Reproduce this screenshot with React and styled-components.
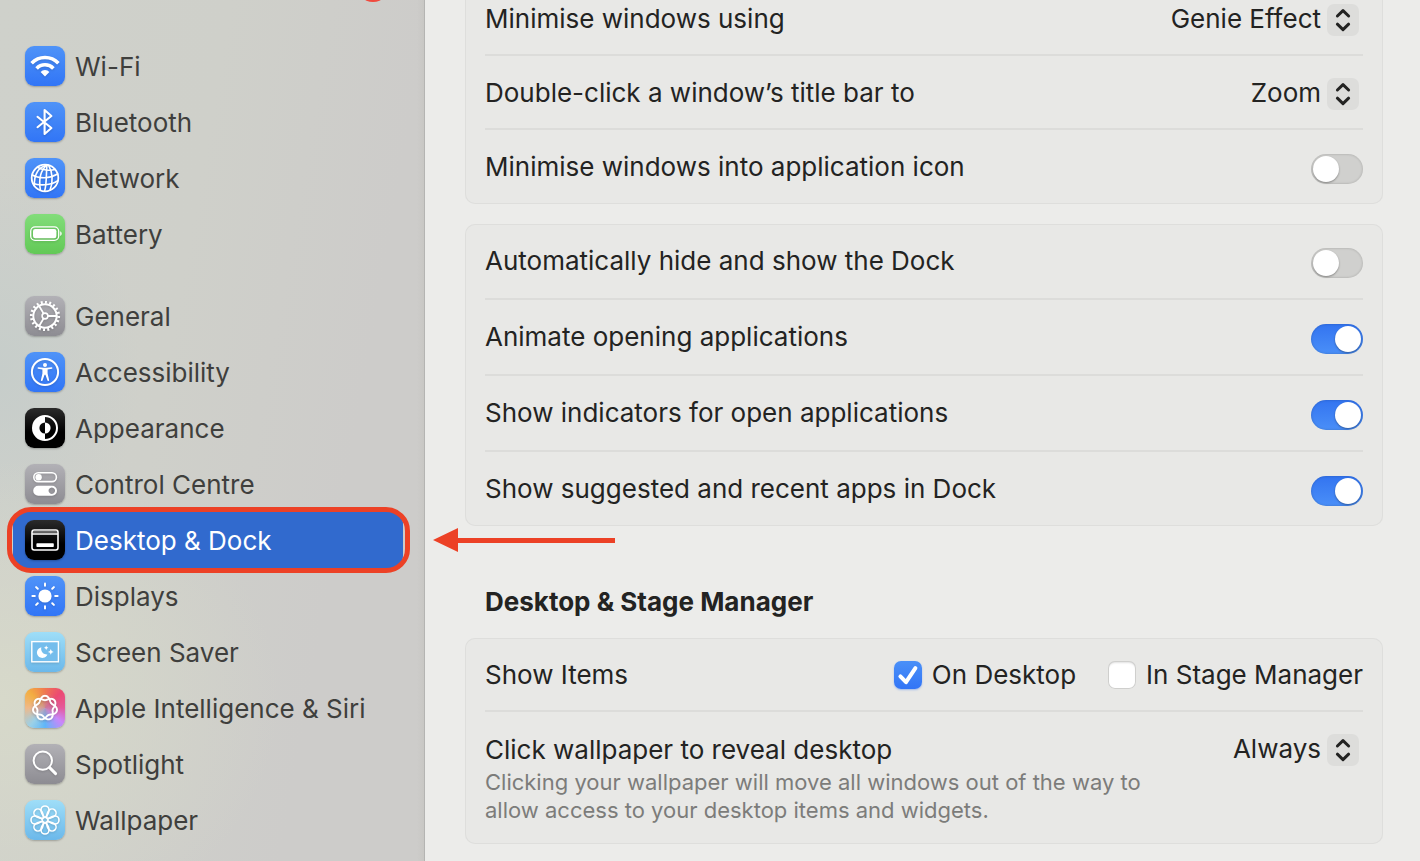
import React, { useState } from "react";
import styled, { createGlobalStyle } from "styled-components";

// STYLES
const GlobalStyle = createGlobalStyle`
  * {
    box-sizing: border-box;
  }
  body {
    margin: 0;
    overflow: hidden;
    background: #ececea;
    color: #232322;
    font-family: Inter, "Liberation Sans", sans-serif;
    font-size: 26px;
    line-height: 36px;
    -webkit-font-smoothing: antialiased;
  }
`;

const Window = styled.div`
  display: flex;
  height: 100vh;
`;

const Sidebar = styled.nav`
  position: relative;
  z-index: 1;
  flex: 0 0 425px;
  padding: 38px 22px 0 13px;
  background:
    linear-gradient(to left, #b4b4b2 0, #b4b4b2 1px, #c8c7c4 1px, rgba(200, 199, 196, 0) 8px),
    radial-gradient(ellipse 280px 240px at 0 700px, #d7d9ca, rgba(215, 217, 202, 0)),
    radial-gradient(ellipse 140px 200px at 0 370px, #c6cdca, rgba(198, 205, 202, 0)),
    linear-gradient(100deg, #cfd1cb 0%, #cfd0ca 40%, #cdccca 75%, #cdccca 100%);
`;

const Badge = styled.span`
  position: absolute;
  top: -32px;
  left: 356px;
  width: 34px;
  height: 34px;
  border-radius: 50%;
  background: #f04a3e;
`;

const Group = styled.ul`
  list-style: none;
  margin: 0 0 26px;
  padding: 0;
`;

const Item = styled.li`
  position: relative;
`;

const ItemLink = styled.a`
  display: flex;
  align-items: center;
  gap: 10px;
  height: 56px;
  padding: 0 12px;
  border-radius: 12px;
  color: ${(p) => (p.$active ? "#ffffff" : "#3f3f3d")};
  background: ${(p) => (p.$active ? "#316ace" : "transparent")};
  text-decoration: none;
  white-space: nowrap;
`;

const ItemName = styled.span`
  padding-top: 2px;
`;

const Tile = styled.span`
  display: block;
  width: 40px;
  height: 40px;
  flex: none;
  border-radius: 9px;
  background: ${(p) => p.$fill};
  box-shadow: 0 1px 2px rgba(0, 0, 0, 0.25);

  svg {
    display: block;
    fill: none;
    stroke: #ffffff;
    stroke-width: 2;
    stroke-linecap: round;
    stroke-linejoin: round;
    filter: drop-shadow(0 1px 1px rgba(0, 0, 0, 0.15));
  }
  .solid {
    fill: #ffffff;
    stroke: none;
  }
`;

const Outline = styled.span`
  position: absolute;
  inset: -5px -7px -5px -6px;
  border: 5px solid #ec4126;
  border-radius: 24px;
  pointer-events: none;
`;

const Arrow = styled.svg`
  position: absolute;
  top: 16px;
  left: 420px;
  fill: #ec4126;
  pointer-events: none;
`;

const Content = styled.main`
  flex: 1;
  min-width: 0;
  padding: 0 37px 0 40px;
`;

const Card = styled.section`
  margin: 0 0 20px;
  padding: 0 20px;
  border-radius: 10px;
  background: #e8e8e6;
  box-shadow: inset 0 0 0 1px #dededc;
`;

// the pane is scrolled a little past the top of its first card
const ScrolledCard = styled(Card)`
  margin-top: -18px;
`;

const Row = styled.div`
  box-sizing: content-box;
  display: flex;
  align-items: ${(p) => (p.$top ? "flex-start" : "center")};
  justify-content: space-between;
  min-height: ${(p) => (p.$top ? 92 : p.$tall ? 74 : 70)}px;
  padding: ${(p) => (p.$top ? "20px 0" : p.$tall ? "0" : "2px 0 0")};

  & + & {
    border-top: 2px solid #dcdcda;
  }
`;

const Label = styled.label`
  display: block;
`;

const Help = styled.p`
  max-width: 670px;
  margin: 0;
  color: #7c7c7a;
  font-size: 22px;
  line-height: 28px;
`;

const Heading = styled.h2`
  margin: 0;
  padding: 38px 20px 18px;
  font-size: 26px;
  font-weight: 700;
  line-height: 36px;
`;

const SelectBox = styled.div`
  position: relative;
  margin: 2px 4px 0 0;

  svg {
    position: absolute;
    top: 0;
    right: 0;
    border-radius: 7px;
    background: #dddddb;
    fill: none;
    stroke: #232322;
    stroke-width: 3;
    stroke-linecap: round;
    stroke-linejoin: round;
    pointer-events: none;
  }
`;

const Select = styled.select`
  display: block;
  field-sizing: content;
  appearance: none;
  height: 32px;
  margin: 0;
  padding: 0 38px 2px 0;
  border: 0;
  background: transparent;
  color: inherit;
  font: inherit;
  line-height: 30px;
  text-align-last: right;
`;

const Switch = styled.input`
  appearance: none;
  display: flex;
  width: 52px;
  height: 30px;
  margin: 4px 0 0;
  padding: 2px;
  border-radius: 15px;
  background: #d0d0ce;
  box-shadow: inset 0 0 2px 1px rgba(0, 0, 0, 0.1);

  &::before {
    content: "";
    width: 26px;
    height: 26px;
    border-radius: 50%;
    background: #ffffff;
    box-shadow: 0 1px 2px rgba(0, 0, 0, 0.35);
  }
  &:checked {
    justify-content: flex-end;
    background: linear-gradient(#3374f0, #4a8ff8);
  }
`;

const Checks = styled.div`
  display: flex;
  gap: 32px;
`;

const Check = styled.label`
  display: flex;
  align-items: center;
  gap: 10px;
`;

const CheckSlot = styled.span`
  position: relative;
  display: block;

  svg {
    position: absolute;
    top: 0;
    left: 0;
    fill: none;
    stroke: #ffffff;
    stroke-width: 4;
    stroke-linecap: round;
    stroke-linejoin: round;
    pointer-events: none;
  }
`;

const CheckInput = styled.input`
  appearance: none;
  display: block;
  width: 28px;
  height: 28px;
  margin: 0;
  border-radius: 7px;
  background: #ffffff;
  box-shadow: inset 0 0 0 1px #cfcfcd, inset 0 2px 2px rgba(0, 0, 0, 0.12);

  &:checked {
    background: linear-gradient(#4a90f8, #3275f6);
    box-shadow: 0 1px 2px rgba(50, 117, 246, 0.4);
  }
`;

const BLUE = "linear-gradient(#4f93f8, #3175f6)";
const GREY = "linear-gradient(#b2b1b6, #8d8c92)";
const BLACK = "linear-gradient(#2b2b2b, #000000 60%)";
const SKY = "linear-gradient(#9fdef8, #6bb8ea)";
const GREEN = "linear-gradient(#82dd7a, #62c956)";
const RAINBOW =
  "radial-gradient(circle at 50% 50%, rgba(190, 140, 170, 0.75), rgba(190, 140, 170, 0) 55%), conic-gradient(from 0deg, #f07850, #ec4a72 45deg, #e55a9c 90deg, #c987fa 130deg, #5fb6f8 180deg, #9ad0e8 220deg, #efb98a 270deg, #f3ae42 315deg, #f07850)";

// seven interlaced lobes, closed after two turns
const knot = () => {
  const points = [];
  for (let i = 0; i < 280; i++) {
    const a = (i / 280) * Math.PI * 4;
    const r = 10 + 2.2 * Math.cos(3.5 * a);
    points.push(
      (20 + r * Math.sin(a)).toFixed(2) + " " + (20 - r * Math.cos(a)).toFixed(2)
    );
  }
  return "M" + points.join("L") + "Z";
};

const turns = [0, 45, 90, 135, 180, 225, 270, 315];

const icons = {
  wifi: (
    <>
      <g strokeWidth="3.6" strokeLinecap="butt">
        <path d="M6.6 17.2a18.6 18.6 0 0 1 26.8 0" />
        <path d="M11.6 22.4a11.5 11.5 0 0 1 16.8 0" />
      </g>
      <path className="solid" d="M20 30.4l-4.4-4.4a6 6 0 0 1 8.8 0z" />
    </>
  ),
  bluetooth: (
    <path d="M12.5 14.8L26.4 26L19.6 32V8L26.4 14L12.5 25.2" strokeWidth="2.1" />
  ),
  network: (
    <g strokeWidth="1.6">
      <circle cx="20" cy="20" r="13.3" strokeWidth="1.8" />
      <path d="M22 6.9C14 9 9 16 9.4 27.6M22 6.9C16 12 13.5 21 15.4 32.2M22 6.9C21 15 22 25 19.6 33.2M23.5 7.2C27.5 14 28.5 24 25 32" />
      <path d="M12.5 9.2C17 12 25 13 30 11.4M7.4 17C14 21 25 20.5 32.6 16M7.8 25.2C14 28 26 27.5 32.8 22.6" />
    </g>
  ),
  battery: (
    <>
      <rect x="5.7" y="12.9" width="28" height="13.4" rx="4.4" strokeWidth="1.3" />
      <rect className="solid" x="8" y="15" width="23.4" height="9.2" rx="2.2" />
      <path className="solid" d="M35.2 17.2c2 .8 2 4 0 4.8z" />
    </>
  ),
  general: (
    <>
      <circle cx="20" cy="20" r="11.7" strokeWidth="2" />
      <circle
        cx="20"
        cy="20"
        r="13.7"
        pathLength="40"
        strokeDasharray="0.9 1.1"
        strokeLinecap="butt"
        strokeWidth="2.8"
      />
      <circle cx="20" cy="20" r="2.9" strokeWidth="1.6" />
      <path d="M23 20H31.4M18.5 17.4L14.3 10.2M18.5 22.6L14.3 29.8" strokeWidth="1.8" />
    </>
  ),
  accessibility: (
    <>
      <circle cx="20" cy="20" r="13.1" />
      <circle className="solid" cx="20" cy="12.9" r="2" />
      <path
        className="solid"
        d="M13.3 15.2L18.4 15.8H21.6L26.7 15.2C27.6 15.2 27.7 16.5 26.9 16.7L22.6 17.6V21.4L24.1 28C24.2 29.1 22.9 29.4 22.5 28.4L20.4 22.8H19.6L17.5 28.4C17.1 29.4 15.8 29.1 15.9 28L17.4 21.4V17.6L13.1 16.7C12.3 16.5 12.4 15.2 13.3 15.2Z"
      />
    </>
  ),
  appearance: (
    <>
      <circle cx="20" cy="20" r="12" />
      <path className="solid" d="M20 8a12 12 0 0 0 0 24v-6.4a5.6 5.6 0 0 1 0-11.2z" />
      <path className="solid" d="M20 14.4a5.6 5.6 0 0 1 0 11.2z" />
    </>
  ),
  control: (
    <>
      <rect x="8.8" y="8.8" width="22.6" height="8.8" rx="4.4" strokeWidth="1.6" />
      <circle className="solid" cx="13.6" cy="13.2" r="3.2" />
      <path
        className="solid"
        fillRule="evenodd"
        d="M13.2 21.7H27a5 5 0 0 1 0 10H13.2a5 5 0 0 1 0-10zM26.8 23.5a3.2 3.2 0 1 0 .01 0z"
      />
    </>
  ),
  dock: (
    <>
      <rect x="7" y="10" width="26" height="20" rx="2.2" strokeWidth="1.6" />
      <path d="M7.5 14H32.5" strokeWidth="1.3" />
      <path d="M8 11.9H32" stroke="#6a6a6a" strokeLinecap="butt" strokeWidth="2" />
      <rect className="solid" x="11.4" y="23.2" width="17.4" height="3.8" rx="0.8" />
    </>
  ),
  displays: (
    <>
      <circle className="solid" cx="20" cy="20" r="6.6" />
      {turns.map((t) => (
        <path key={t} d="M20 7.4V9.8" transform={`rotate(${t} 20 20)`} />
      ))}
    </>
  ),
  saver: (
    <>
      <rect
        x="6.8"
        y="9.6"
        width="26.6"
        height="20.2"
        fill="#74bdec"
        strokeLinejoin="miter"
        strokeWidth="1.4"
      />
      <path
        className="solid"
        d="M16.4 15.2A5.4 5.4 0 1 0 22.4 22.4A5.6 5.6 0 0 1 16.4 15.2Z"
      />
      <path
        className="solid"
        d="M21.2 13.6l.7 1.5 1.5.7-1.5.7-.7 1.5-.7-1.5-1.5-.7 1.5-.7zM25.8 17l.9 2 2 .9-2 .9-.9 2-.9-2-2-.9 2-.9z"
      />
    </>
  ),
  siri: <path d={knot()} strokeWidth="1.9" />,
  spotlight: (
    <>
      <circle cx="17.8" cy="16.6" r="9.2" />
      <path d="M24.6 23.6L30.6 29.6" strokeWidth="2.9" />
    </>
  ),
  wallpaper: (
    <>
      {turns.map((t) => (
        <path
          key={t}
          d="M20 17.6C17.6 15.4 16 12.6 16 10A4 4 0 0 1 24 10C24 12.6 22.4 15.4 20 17.6Z"
          strokeWidth="1.6"
          transform={`rotate(${t} 20 20)`}
        />
      ))}
    </>
  ),
};

const network_items = [
  { name: "Wi-Fi", icon: "wifi", fill: BLUE },
  { name: "Bluetooth", icon: "bluetooth", fill: BLUE },
  { name: "Network", icon: "network", fill: BLUE },
  { name: "Battery", icon: "battery", fill: GREEN },
];

const system_items = [
  { name: "General", icon: "general", fill: GREY },
  { name: "Accessibility", icon: "accessibility", fill: BLUE },
  { name: "Appearance", icon: "appearance", fill: BLACK },
  { name: "Control Centre", icon: "control", fill: GREY },
  { name: "Desktop & Dock", icon: "dock", fill: BLACK },
  { name: "Displays", icon: "displays", fill: BLUE },
  { name: "Screen Saver", icon: "saver", fill: SKY },
  { name: "Apple Intelligence & Siri", icon: "siri", fill: RAINBOW },
  { name: "Spotlight", icon: "spotlight", fill: GREY },
  { name: "Wallpaper", icon: "wallpaper", fill: SKY },
];

const SidebarGroup = ({ items, active }) => (
  <Group>
    {items.map((item) => (
      <Item key={item.name}>
        <ItemLink
          href={"#" + item.icon}
          $active={item.name === active}
          aria-current={item.name === active ? "page" : undefined}
        >
          <Tile $fill={item.fill}>
            <svg width="40" height="40" viewBox="0 0 40 40" aria-hidden="true">
              {icons[item.icon]}
            </svg>
          </Tile>
          <ItemName>{item.name}</ItemName>
        </ItemLink>
        {item.name === active && (
          <>
            <Outline />
            <Arrow width="182" height="24" viewBox="0 0 182 24" aria-hidden="true">
              <path d="M0 12L25 0V10H182V15H25V24Z" />
            </Arrow>
          </>
        )}
      </Item>
    ))}
  </Group>
);

const PopUp = ({ id, options }) => (
  <SelectBox>
    <Select id={id} defaultValue={options[0]}>
      {options.map((o) => (
        <option key={o}>{o}</option>
      ))}
    </Select>
    <svg width="32" height="32" viewBox="0 0 32 32" aria-hidden="true">
      <path d="M10.4 12L16 6.6L21.6 12M10.4 20.2L16 25.6L21.6 20.2" />
    </svg>
  </SelectBox>
);

const SwitchRow = ({ id, label, on }) => {
  const [checked, setChecked] = useState(Boolean(on));
  return (
    <Row $tall>
      <Label htmlFor={id}>{label}</Label>
      <Switch
        id={id}
        type="checkbox"
        role="switch"
        checked={checked}
        onChange={() => setChecked(!checked)}
      />
    </Row>
  );
};

const CheckBox = ({ label, on }) => {
  const [checked, setChecked] = useState(Boolean(on));
  return (
    <Check>
      <CheckSlot>
        <CheckInput
          type="checkbox"
          checked={checked}
          onChange={() => setChecked(!checked)}
        />
        {checked && (
          <svg width="28" height="28" viewBox="0 0 28 28" aria-hidden="true">
            <path d="M6.4 15.4L12 21.2L21.4 7.2" />
          </svg>
        )}
      </CheckSlot>
      {label}
    </Check>
  );
};

const App = () => {
  return (
    <>
      <GlobalStyle />
      <Window>
        <Sidebar>
          <Badge />
          <SidebarGroup items={network_items} />
          <SidebarGroup items={system_items} active="Desktop & Dock" />
        </Sidebar>
        <Content>
          <ScrolledCard>
            <Row>
              <Label htmlFor="minimise">Minimise windows using</Label>
              <PopUp id="minimise" options={["Genie Effect", "Scale Effect"]} />
            </Row>
            <Row>
              <Label htmlFor="titlebar">Double-click a window’s title bar to</Label>
              <PopUp id="titlebar" options={["Zoom", "Minimise"]} />
            </Row>
            <SwitchRow id="into-icon" label="Minimise windows into application icon" />
          </ScrolledCard>
          <Card>
            <SwitchRow id="autohide" label="Automatically hide and show the Dock" />
            <SwitchRow id="animate" label="Animate opening applications" on />
            <SwitchRow id="indicators" label="Show indicators for open applications" on />
            <SwitchRow id="recents" label="Show suggested and recent apps in Dock" on />
          </Card>
          <Heading>Desktop &amp; Stage Manager</Heading>
          <Card>
            <Row>
              <span>Show Items</span>
              <Checks>
                <CheckBox label="On Desktop" on />
                <CheckBox label="In Stage Manager" />
              </Checks>
            </Row>
            <Row $top>
              <div>
                <Label htmlFor="wallpaper-click">Click wallpaper to reveal desktop</Label>
                <Help>
                  Clicking your wallpaper will move all windows out of the way to
                  allow access to your desktop items and widgets.
                </Help>
              </div>
              <PopUp id="wallpaper-click" options={["Always", "Only in Stage Manager"]} />
            </Row>
          </Card>
        </Content>
      </Window>
    </>
  );
};

export default App;
